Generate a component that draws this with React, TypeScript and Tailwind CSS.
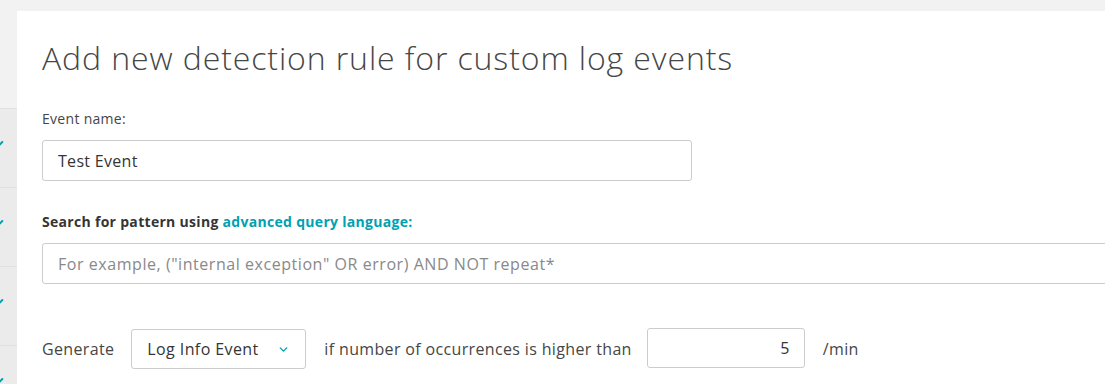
import { ChevronDown, Check } from 'lucide-react';

const font = { fontFamily: '"Open Sans", Roboto, sans-serif' };

function SideItem() {
  return (
    <div className="h-[79px] shrink-0 border-t border-[#e0e0e0] bg-[#ebebeb] overflow-hidden">
      <div className="pt-[29px] -ml-[11px]">
        <Check size={16} strokeWidth={3} className="text-[#00a1b2]" />
      </div>
    </div>
  );
}

export default function App() {
  return (
    <div className="w-full h-[384px] bg-[#f2f2f2] overflow-hidden text-[#454646]" style={font}>
      <div className="flex pt-[11px] h-full">
        <div className="w-[17px] shrink-0 pt-[97px] flex flex-col">
          <SideItem />
          <SideItem />
          <SideItem />
          <SideItem />
        </div>
        <div className="flex-1 bg-white pl-[25px] pt-[27px] overflow-hidden">
          <h1 className="text-[32px] leading-[40px] font-light tracking-[0.9px] text-[#454646]">
            Add new detection rule for custom log events
          </h1>

          <div className="mt-[32px] text-[14px] leading-[18px] tracking-[0.3px]">Event name:</div>
          <div className="mt-[12px] w-[650px] h-[41px] border border-[#cccccc] rounded-[3px] flex items-center px-[15px] text-[16px] tracking-[0.3px] text-[#353535]">
            Test Event
          </div>

          <div className="mt-[32px] text-[14px] leading-[18px] font-bold tracking-[0.3px] text-[#353535]">
            Search for pattern using{' '}
            <a className="text-[#00a1b2]">advanced query language:</a>
          </div>
          <div className="mt-[12px] w-[1100px] h-[41px] border border-[#cccccc] rounded-[3px] flex items-center px-[15px] text-[16px] tracking-[0.55px] text-[#898989]">
            For example, ("internal exception" OR error) AND NOT repeat*
          </div>

          <div className="mt-[45px] flex items-center text-[16px] tracking-[0.35px]">
            <span>Generate</span>
            <div className="ml-[17px] w-[175px] h-[40px] border border-[#cccccc] rounded-[3px] flex items-center justify-between pl-[15px] pr-[15px] text-[#353535] tracking-[0.4px]">
              <span>Log Info Event</span>
              <ChevronDown size={13} strokeWidth={2.5} className="text-[#00a1b2]" />
            </div>
            <span className="ml-[18px]">if number of occurrences is higher than</span>
            <div className="ml-[15px] w-[158px] h-[40px] -mt-[3px] border border-[#cccccc] rounded-[3px] flex items-center justify-end pr-[14px] text-[#353535]">
              5
            </div>
            <span className="ml-[18px]">/min</span>
          </div>
        </div>
      </div>
    </div>
  );
}
